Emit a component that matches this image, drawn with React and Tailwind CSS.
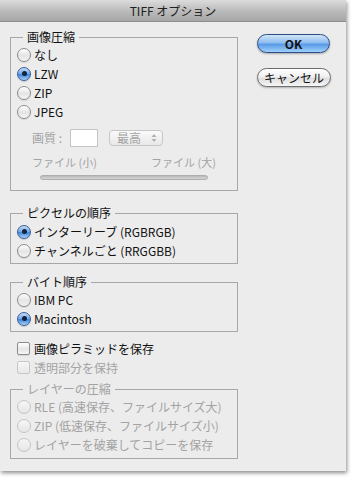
import React from "react";

function Radio({ checked = false, disabled = false }) {
  if (checked) {
    return (
      <span className="flex h-[14px] w-[14px] shrink-0 items-center justify-center rounded-full border border-[#3b5f99] bg-[linear-gradient(to_bottom,#c6ddf5_0%,#6ea6e6_50%,#3f86dc_55%,#a9d0f7_100%)] shadow-[0_1px_1px_rgba(0,0,0,0.15)]">
        <span className="h-[5px] w-[5px] rounded-full bg-[#14233f]" />
      </span>
    );
  }
  return (
    <span
      className={
        "h-[14px] w-[14px] shrink-0 rounded-full border " +
        (disabled
          ? "border-[#c4c4c4] bg-[linear-gradient(to_bottom,#f6f6f6,#e6e6e6)]"
          : "border-[#8c8c8c] bg-[linear-gradient(to_bottom,#ffffff,#e4e4e4_55%,#f4f4f4)] shadow-[0_1px_1px_rgba(0,0,0,0.1)]")
      }
    />
  );
}

function Check({ disabled = false }) {
  return (
    <span
      className={
        "h-[13px] w-[13px] shrink-0 rounded-[2px] border " +
        (disabled
          ? "border-[#c8c8c8] bg-[linear-gradient(to_bottom,#f6f6f6,#e8e8e8)]"
          : "border-[#8c8c8c] bg-[linear-gradient(to_bottom,#ffffff,#e6e6e6_55%,#f4f4f4)] shadow-[0_1px_1px_rgba(0,0,0,0.1)]")
      }
    />
  );
}

function RadioRow({ label, checked, disabled }) {
  return (
    <div className="flex h-[19px] items-center gap-[3px]">
      <Radio checked={checked} disabled={disabled} />
      <span className={disabled ? "text-[#a3a3a3]" : "text-[#111111]"}>{label}</span>
    </div>
  );
}

function Group({ title, disabled, className = "", bodyClass = "", children }) {
  return (
    <div className={"w-[228px] " + className}>
      <div className="flex h-[16px]">
        <div className="mt-[8px] w-[13px] border-l border-t border-[#a7a7a7]" />
        <span
          className={
            "px-[4px] leading-[16px] " +
            (disabled ? "text-[#a3a3a3]" : "text-[#111111]")
          }
        >
          {title}
        </span>
        <div className="mt-[8px] flex-1 border-r border-t border-[#a7a7a7]" />
      </div>
      <div className={"border-b border-l border-r border-[#a7a7a7] pl-[6px] " + bodyClass}>
        {children}
      </div>
    </div>
  );
}

export default function App() {
  return (
    <div className="h-[479px] w-[351px] bg-white font-['Noto_Sans_CJK_JP','Liberation_Sans',sans-serif] text-[12px]">
      <div className="flex h-[471px] w-[346px] flex-col bg-[#ececec] shadow-[1px_2px_4px_rgba(0,0,0,0.45)]">
        {/* Title bar */}
        <div className="flex h-[22px] shrink-0 items-center justify-center border-b border-[#8d8d8d] bg-[linear-gradient(to_bottom,#dcdcdc,#bcbcbc_50%,#a6a6a6)] text-[12px] text-[#202020]">
          TIFF オプション
        </div>

        <div className="flex pl-[10px] pt-[7px]">
          {/* Left column */}
          <div className="flex w-[228px] flex-col">
            <Group title="画像圧縮" bodyClass="pb-[10px]">
              <RadioRow label="なし" />
              <RadioRow label="LZW" checked />
              <RadioRow label="ZIP" />
              <RadioRow label="JPEG" />
              <div className="ml-[15px] mr-[21px] text-[#a3a3a3]">
                <div className="mt-[8px] flex h-[18px] items-center">
                  <span className="w-[38px]">画質 :</span>
                  <span className="h-[18px] w-[28px] border border-[#c6c6c6] bg-white" />
                  <span className="ml-[11px] flex h-[16px] w-[54px] items-center justify-between rounded-[4px] border border-[#c6c6c6] bg-[linear-gradient(to_bottom,#fafafa,#e8e8e8)] pl-[7px] pr-[5px] text-[12px] leading-none">
                    最高
                    <svg width="6" height="10" viewBox="0 0 6 10">
                      <path d="M3 1 L5.5 4 H0.5 Z" fill="#b0b0b0" />
                      <path d="M3 9 L5.5 6 H0.5 Z" fill="#b0b0b0" />
                    </svg>
                  </span>
                </div>
                <div className="mt-[8px] flex h-[14px] items-center justify-between text-[11px]">
                  <span>ファイル (小)</span>
                  <span>ファイル (大)</span>
                </div>
                <div className="mx-[8px] mt-[6px] h-[5px] rounded-full border border-[#aeaeae] bg-[linear-gradient(to_bottom,#b9b9b9,#d6d6d6)]" />
              </div>
            </Group>

            <Group title="ピクセルの順序" className="mt-[14px]" bodyClass="pb-[3px] pt-[1px]">
              <RadioRow label="インターリーブ (RGBRGB)" checked />
              <RadioRow label="チャンネルごと (RRGGBB)" />
            </Group>

            <Group title="バイト順序" className="mt-[10px]" bodyClass="pb-[3px]">
              <RadioRow label="IBM PC" />
              <RadioRow label="Macintosh" checked />
            </Group>

            <div className="mt-[7px] pl-[7px]">
              <div className="flex h-[19px] items-center gap-[4px]">
                <Check />
                <span className="text-[#111111]">画像ピラミッドを保存</span>
              </div>
              <div className="flex h-[19px] items-center gap-[4px]">
                <Check disabled />
                <span className="text-[#a3a3a3]">透明部分を保持</span>
              </div>
            </div>

            <Group title="レイヤーの圧縮" disabled className="mt-[4px]" bodyClass="pb-[4px]">
              <RadioRow label="RLE (高速保存、ファイルサイズ大)" disabled />
              <RadioRow label="ZIP (低速保存、ファイルサイズ小)" disabled />
              <RadioRow label="レイヤーを破棄してコピーを保存" disabled />
            </Group>
          </div>

          {/* Right column: buttons */}
          <div className="ml-[19px] flex w-[74px] flex-col pt-[5px]">
            <button className="flex h-[19px] w-[73px] items-center justify-center rounded-full border border-[#2d4f88] bg-[linear-gradient(to_bottom,#d3e6fa_0%,#8fbdef_45%,#5a9be6_55%,#9fd0fb_100%)] text-[12px] font-bold text-[#111] shadow-[0_1px_2px_rgba(0,0,0,0.3)]">
              OK
            </button>
            <button className="mt-[15px] flex h-[19px] w-[74px] items-center justify-center rounded-full border border-[#6f6f6f] bg-[linear-gradient(to_bottom,#ffffff_0%,#f0f0f0_45%,#dedede_55%,#f6f6f6_100%)] text-[12px] text-[#111] shadow-[0_1px_2px_rgba(0,0,0,0.25)]">
              キャンセル
            </button>
          </div>
        </div>
      </div>
    </div>
  );
}
